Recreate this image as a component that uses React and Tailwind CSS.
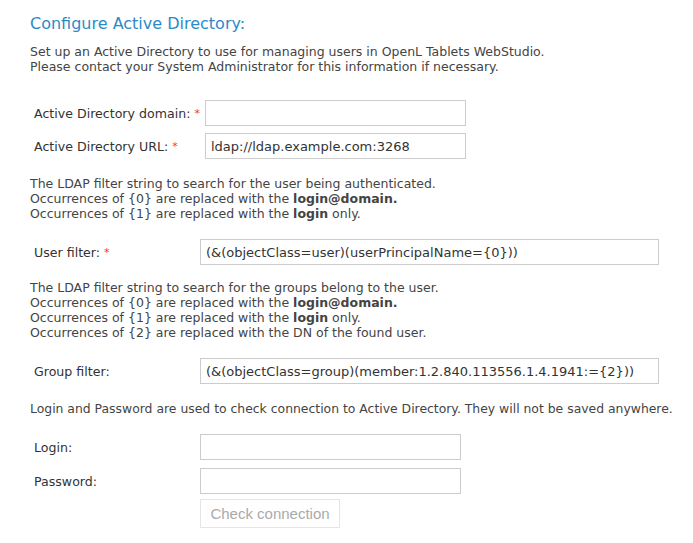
const Req = () => <span className="text-[#e33] text-[11px] align-top ml-1">*</span>;

const Row = ({ label, required, value, labelW, inputW }) => (
  <div className="flex items-center h-[26px]">
    <div className={`${labelW} text-[12.6px] text-[#333] pl-1`}>
      {label}
      {required && <Req />}
    </div>
    <input
      readOnly
      value={value || ""}
      className={`${inputW} h-[26px] border border-[#ccc] px-[5px] text-[13px] text-[#333] outline-none`}
    />
  </div>
);

export default function App() {
  return (
    <div className="px-[30px] pt-[14px] text-[12.5px] leading-[15px] text-[#444] font-['DejaVu_Sans',Verdana,sans-serif] w-[693px] h-[543px] bg-white overflow-hidden">
      <h1 className="text-[16px] leading-[20px] text-[#2c8ac8] mb-[10px]">Configure Active Directory:</h1>
      <p>
        Set up an Active Directory to use for managing users in OpenL Tablets WebStudio.
        <br />
        Please contact your System Administrator for this information if necessary.
      </p>

      <div className="mt-[26px] flex flex-col gap-[7px]">
        <Row label="Active Directory domain:" required labelW="w-[175px]" inputW="w-[261px]" />
        <Row label="Active Directory URL:" required labelW="w-[175px]" inputW="w-[261px]" value="ldap://ldap.example.com:3268" />
      </div>

      <p className="mt-[17px]">
        The LDAP filter string to search for the user being authenticated.
        <br />
        Occurrences of {"{0}"} are replaced with the <b>login@domain.</b>
        <br />
        Occurrences of {"{1}"} are replaced with the <b>login</b> only.
      </p>

      <div className="mt-[18px]">
        <Row label="User filter:" required labelW="w-[170px]" inputW="w-[459px]" value="(&(objectClass=user)(userPrincipalName={0}))" />
      </div>

      <p className="mt-[15px]">
        The LDAP filter string to search for the groups belong to the user.
        <br />
        Occurrences of {"{0}"} are replaced with the <b>login@domain.</b>
        <br />
        Occurrences of {"{1}"} are replaced with the <b>login</b> only.
        <br />
        Occurrences of {"{2}"} are replaced with the DN of the found user.
      </p>

      <div className="mt-[18px]">
        <Row label="Group filter:" labelW="w-[170px]" inputW="w-[459px]" value="(&(objectClass=group)(member:1.2.840.113556.1.4.1941:={2}))" />
      </div>

      <p className="mt-[17px] whitespace-nowrap text-[12.4px]">
        Login and Password are used to check connection to Active Directory. They will not be saved anywhere.
      </p>

      <div className="mt-[18px] flex flex-col gap-[8px]">
        <Row label="Login:" labelW="w-[170px]" inputW="w-[261px]" />
        <Row label="Password:" labelW="w-[170px]" inputW="w-[261px]" />
      </div>
      <div className="pl-[170px] mt-[5px]">
        <button className="w-[140px] h-[29px] border border-[#e5e5e5] text-[#aaa] text-[15px] font-['Liberation_Sans',Arial,sans-serif]">
          Check connection
        </button>
      </div>
    </div>
  );
}
